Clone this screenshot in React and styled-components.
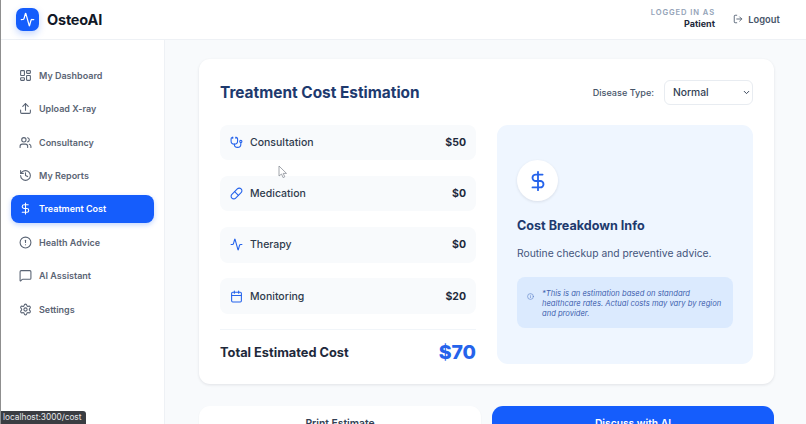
import React from "react";
import styled, { createGlobalStyle } from "styled-components";
import {
  Activity,
  Calendar,
  ChevronDown,
  CircleAlert,
  DollarSign,
  History,
  Info,
  LayoutDashboard,
  LogOut,
  MessageSquare,
  Pill,
  Settings,
  Stethoscope,
  Upload,
  Users,
} from "lucide-react";

const NAV_ITEMS = [
  { label: "My Dashboard", icon: LayoutDashboard },
  { label: "Upload X-ray", icon: Upload },
  { label: "Consultancy", icon: Users },
  { label: "My Reports", icon: History },
  { label: "Treatment Cost", icon: DollarSign, active: true },
  { label: "Health Advice", icon: CircleAlert },
  { label: "AI Assistant", icon: MessageSquare },
  { label: "Settings", icon: Settings },
];

const COSTS = [
  { label: "Consultation", amount: "$50", icon: Stethoscope },
  { label: "Medication", amount: "$0", icon: Pill },
  { label: "Therapy", amount: "$0", icon: Activity },
  { label: "Monitoring", amount: "$20", icon: Calendar },
];

const App = () => {
  return (
    <Page>
      <GlobalStyle />
      <Header>
        <Brand>
          <LogoBox>
            <Activity size={15} color="#fff" strokeWidth={2} />
          </LogoBox>
          <BrandName>OsteoAI</BrandName>
        </Brand>
        <HeaderRight>
          <UserInfo>
            <UserCaption>LOGGED IN AS</UserCaption>
            <UserRole>Patient</UserRole>
          </UserInfo>
          <LogoutButton>
            <LogOut size={10} strokeWidth={2} />
            Logout
          </LogoutButton>
        </HeaderRight>
      </Header>
      <Body>
        <Sidebar>
          {NAV_ITEMS.map(({ label, icon: Icon, active }) => (
            <NavItem key={label} $active={active}>
              <Icon size={13} strokeWidth={2} />
              {label}
            </NavItem>
          ))}
        </Sidebar>
        <Main>
          <Card>
            <CardHeader>
              <Title>Treatment Cost Estimation</Title>
              <DiseaseField>
                <DiseaseLabel>Disease Type:</DiseaseLabel>
                <SelectWrap>
                  <DiseaseSelect defaultValue="Normal">
                    <option>Normal</option>
                  </DiseaseSelect>
                  <SelectChevron size={9} strokeWidth={2.6} />
                </SelectWrap>
              </DiseaseField>
            </CardHeader>
            <Columns>
              <CostColumn>
                <CostList>
                  {COSTS.map(({ label, amount, icon: Icon }) => (
                    <CostRow key={label}>
                      <CostName>
                        <Icon size={13} color="#2563eb" strokeWidth={2} />
                        {label}
                      </CostName>
                      <CostAmount>{amount}</CostAmount>
                    </CostRow>
                  ))}
                </CostList>
                <TotalRow>
                  <TotalLabel>Total Estimated Cost</TotalLabel>
                  <TotalAmount>$70</TotalAmount>
                </TotalRow>
              </CostColumn>
              <InfoPanel>
                <InfoBadge>
                  <DollarSign size={22} color="#2563eb" strokeWidth={2} />
                </InfoBadge>
                <InfoTitle>Cost Breakdown Info</InfoTitle>
                <InfoText>Routine checkup and preventive advice.</InfoText>
                <Disclaimer>
                  <Info size={7} strokeWidth={2} />
                  <DisclaimerText>
                    *This is an estimation based on standard healthcare rates.
                    Actual costs may vary by region and provider.
                  </DisclaimerText>
                </Disclaimer>
              </InfoPanel>
            </Columns>
          </Card>
          <Actions>
            <PrintButton>Print Estimate</PrintButton>
            <DiscussButton>Discuss with AI</DiscussButton>
          </Actions>
        </Main>
      </Body>
      <Cursor width="10" height="14" viewBox="0 0 10 14">
        <path
          d="M1 1v10l2.5-2 1.6 3.6 1.7-.8-1.6-3.4H8.5z"
          fill="#fff"
          stroke="#8a8f98"
          strokeWidth="0.8"
        />
      </Cursor>
      <StatusTip>localhost:3000/cost</StatusTip>
    </Page>
  );
};

const GlobalStyle = createGlobalStyle`
  html, body {
    margin: 0;
    padding: 0;
    overflow: hidden;
  }
  * {
    box-sizing: border-box;
  }
`;

const Page = styled.div`
  position: relative;
  width: 806px;
  height: 424px;
  overflow: hidden;
  display: flex;
  flex-direction: column;
  border-left: 1px solid #8f8f8f;
  background: #f8fafc;
  font-family: Inter, "Liberation Sans", sans-serif;
  color: #1f2937;
`;

const Header = styled.header`
  flex: none;
  height: 40px;
  display: flex;
  align-items: center;
  justify-content: space-between;
  padding: 0 14px 1px 15px;
  background: #fff;
  border-bottom: 1px solid #eef1f5;
`;

const Brand = styled.div`
  display: flex;
  align-items: center;
  gap: 8px;
`;

const LogoBox = styled.div`
  width: 23px;
  height: 23px;
  border-radius: 7px;
  display: flex;
  align-items: center;
  justify-content: center;
  background: #155dfc;
  box-shadow: 0 3px 7px rgba(21, 93, 252, 0.25);
`;

const BrandName = styled.span`
  font-size: 14.5px;
  font-weight: 700;
  letter-spacing: -0.2px;
  color: #111827;
`;

const HeaderRight = styled.div`
  display: flex;
  align-items: center;
  gap: 6px;
`;

const UserInfo = styled.div`
  display: flex;
  flex-direction: column;
  align-items: flex-end;
  gap: 1px;
  margin-bottom: 1px;
`;

const UserCaption = styled.span`
  font-size: 7.6px;
  font-weight: 600;
  letter-spacing: 0.9px;
  color: #94a3b8;
`;

const UserRole = styled.span`
  font-size: 9px;
  font-weight: 700;
  color: #1e293b;
`;

const LogoutButton = styled.div`
  width: 71px;
  height: 26px;
  display: flex;
  align-items: center;
  justify-content: center;
  gap: 5px;
  border-radius: 8px;
  font-size: 9.3px;
  font-weight: 600;
  color: #475569;
`;

const Body = styled.div`
  flex: 1;
  min-height: 0;
  display: flex;
`;

const Sidebar = styled.nav`
  flex: none;
  width: 164px;
  padding: 21px 10px 0;
  display: flex;
  flex-direction: column;
  gap: 4.8px;
  background: #fff;
  border-right: 1px solid #eef1f5;
`;

const NavItem = styled.div`
  height: 28.6px;
  display: flex;
  align-items: center;
  gap: 7px;
  padding-left: 8px;
  border-radius: 8px;
  font-size: 9px;
  font-weight: 600;
  color: ${(props) => (props.$active ? "#fff" : "#5a6474")};
  background: ${(props) => (props.$active ? "#155dfc" : "transparent")};
  box-shadow: ${(props) =>
    props.$active ? "0 2px 5px rgba(21, 93, 252, 0.25)" : "none"};
`;

const Main = styled.main`
  flex: 1;
  min-width: 0;
  padding: 19px 32px 0 34px;
`;

const Card = styled.section`
  height: 325px;
  padding: 21px 21px 0;
  background: #fff;
  border-radius: 11px;
  box-shadow: 0 1px 3px rgba(15, 23, 42, 0.1);
`;

const CardHeader = styled.div`
  height: 24px;
  display: flex;
  align-items: center;
  justify-content: space-between;
`;

const Title = styled.h1`
  margin: 0;
  font-size: 15.4px;
  font-weight: 700;
  color: #1e3a6e;
`;

const DiseaseField = styled.div`
  display: flex;
  align-items: center;
  gap: 10px;
`;

const DiseaseLabel = styled.span`
  font-size: 9.1px;
  font-weight: 500;
  color: #475569;
`;

const SelectWrap = styled.div`
  position: relative;
  display: flex;
`;

const DiseaseSelect = styled.select`
  appearance: none;
  width: 89px;
  height: 25px;
  padding: 0 14px 0 8px;
  border: 1px solid #e8ecf1;
  border-radius: 6px;
  background: #fff;
  font-family: inherit;
  font-size: 10.3px;
  font-weight: 500;
  color: #334155;
`;

const SelectChevron = styled(ChevronDown)`
  position: absolute;
  right: 2px;
  top: 8px;
  color: #334155;
  pointer-events: none;
`;

const Columns = styled.div`
  margin-top: 20.5px;
  display: grid;
  grid-template-columns: 256px 256px;
  gap: 21px;
`;

const CostColumn = styled.div`
  display: flex;
  flex-direction: column;
`;

const CostList = styled.div`
  display: flex;
  flex-direction: column;
  gap: 15.8px;
`;

const CostRow = styled.div`
  height: 35.5px;
  display: flex;
  align-items: center;
  justify-content: space-between;
  padding: 0 10px;
  border-radius: 8px;
  background: #f8fafc;
`;

const CostName = styled.span`
  display: flex;
  align-items: center;
  gap: 7px;
  font-size: 10.5px;
  font-weight: 500;
  color: #2f3b4c;
`;

const CostAmount = styled.span`
  font-size: 10.5px;
  font-weight: 700;
  color: #1e293b;
`;

const TotalRow = styled.div`
  margin-top: 15.5px;
  height: 45px;
  display: flex;
  align-items: center;
  justify-content: space-between;
  border-top: 1px solid #f1f5f9;
`;

const TotalLabel = styled.span`
  font-size: 12.8px;
  font-weight: 700;
  color: #1e293b;
`;

const TotalAmount = styled.span`
  font-size: 19.4px;
  font-weight: 800;
  color: #2563eb;
`;

const InfoPanel = styled.aside`
  height: 239.5px;
  padding: 35.5px 20px 0;
  border-radius: 11px;
  background: #eff6ff;
`;

const InfoBadge = styled.div`
  width: 41px;
  height: 41px;
  border-radius: 50%;
  display: flex;
  align-items: center;
  justify-content: center;
  background: #fff;
  box-shadow: 0 1px 3px rgba(15, 23, 42, 0.1);
`;

const InfoTitle = styled.h2`
  margin: 17px 0 0;
  font-size: 12.6px;
  font-weight: 700;
  line-height: 16px;
  color: #1e3a6e;
`;

const InfoText = styled.p`
  margin: 12px 0 0;
  font-size: 10.3px;
  line-height: 15px;
  color: #44557c;
`;

const Disclaimer = styled.div`
  margin-top: 16px;
  height: 51px;
  display: flex;
  align-items: flex-start;
  gap: 8px;
  padding: 12px 10px 0;
  border-radius: 8px;
  background: #dbeafe;
  color: #5b80c8;

  svg {
    flex: none;
    margin-top: 4px;
  }
`;

const DisclaimerText = styled.p`
  margin: 0;
  font-size: 7.6px;
  font-style: italic;
  line-height: 10.2px;
  color: #3f62ae;
`;

const Actions = styled.div`
  margin-top: 22px;
  display: grid;
  grid-template-columns: 282px 282px;
  gap: 11px;
`;

const ActionButton = styled.button`
  height: 40px;
  padding: 0 0 6px;
  border: none;
  border-radius: 11px;
  font-family: inherit;
  font-size: 10.3px;
  font-weight: 600;
`;

const PrintButton = styled(ActionButton)`
  background: #fff;
  color: #334155;
  box-shadow: 0 1px 2px rgba(15, 23, 42, 0.06);
`;

const DiscussButton = styled(ActionButton)`
  background: #155dfc;
  color: #fff;
`;

const Cursor = styled.svg`
  position: absolute;
  left: 277px;
  top: 165px;
`;

const StatusTip = styled.div`
  position: absolute;
  left: -1px;
  bottom: 0;
  width: 86px;
  height: 13px;
  padding-left: 3px;
  border-radius: 0 3px 0 0;
  background: #3a3d42;
  font-size: 8.3px;
  line-height: 13px;
  color: #e5e7eb;
  white-space: nowrap;
`;

export default App;
